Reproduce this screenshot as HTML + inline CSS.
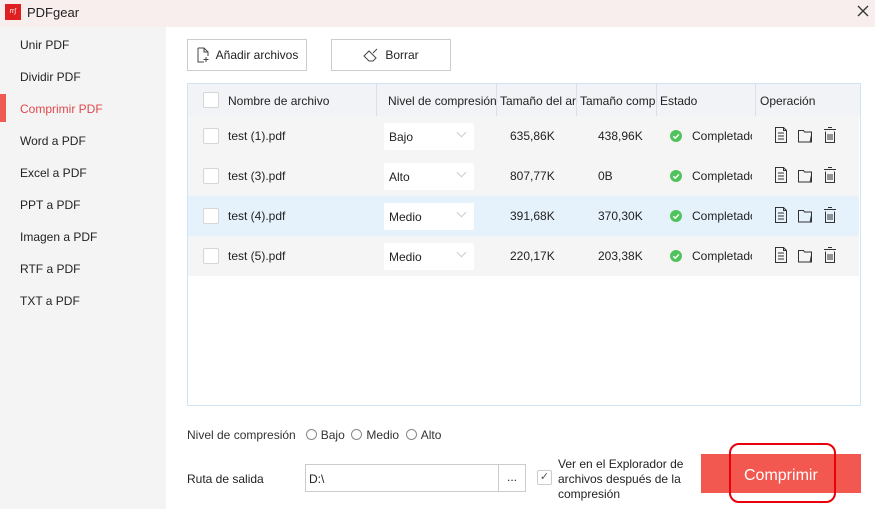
<!DOCTYPE html>
<html><head><meta charset="utf-8"><style>
*{margin:0;padding:0;box-sizing:border-box}
body{width:875px;height:509px;overflow:hidden;font-family:"Liberation Sans",sans-serif;font-size:12px;color:#222;background:#fff;position:relative}
.abs{position:absolute}
.title{left:0;top:0;width:875px;height:27px;background:#f8eeed}
.side{left:0;top:27px;width:166px;height:482px;background:#f4f4f4}
.side div{position:absolute;left:20px;font-size:12px;color:#222}
.btn{border:1px solid #ccc;background:#fff;height:32px;display:flex;align-items:center;justify-content:center;font-size:12px}
.cb{position:absolute;width:16px;height:16px;border:1px solid #d6d6d6;border-radius:2px;background:#fff}
.row{position:absolute;left:188px;width:671px;height:40px;background:#f5f5f5}
.row span{position:absolute;top:13px}
.dd{position:absolute;left:196px;top:7px;width:90px;height:27px;background:#fff;border-radius:2px}
.dd i{position:absolute;left:5px;top:7px;font-style:normal}
.dd b{position:absolute;right:9px;top:6px;width:7px;height:7px;border-right:1px solid #ccc;border-bottom:1px solid #ccc;transform:rotate(45deg)}
.ok{position:absolute;left:482px;top:14px;width:12px;height:12px}
.ops{position:absolute;left:586px;top:11px}
.hd{position:absolute;top:10px;font-size:12px}
.sep{position:absolute;top:0;width:1px;height:33px;background:#dde}
.radio{display:inline-block;width:11px;height:11px;border:1px solid #888;border-radius:50%;vertical-align:-1px;margin-right:4px}
</style></head><body>
<div class="abs title"></div>
<div class="abs" style="left:5px;top:4px;width:16px;height:16px;background:#e02020;color:#fff;font-size:7px;line-height:16px;text-align:center">rr∫</div>
<div class="abs" style="left:27px;top:5px;font-size:13px">PDFgear</div>
<svg class="abs" style="left:857px;top:5px" width="12" height="12"><path d="M1 1L11 11M11 1L1 11" stroke="#333" stroke-width="1.3"/></svg>
<div class="abs side">
<div style="top:11px">Unir PDF</div>
<div style="top:43px">Dividir PDF</div>
<div style="top:75px;color:#e0484b">Comprimir PDF</div>
<div style="top:107px">Word a PDF</div>
<div style="top:139px">Excel a PDF</div>
<div style="top:171px">PPT a PDF</div>
<div style="top:203px">Imagen a PDF</div>
<div style="top:235px">RTF a PDF</div>
<div style="top:267px">TXT a PDF</div>
<span style="position:absolute;left:0;top:67px;width:6px;height:28px;background:#f05a55"></span>
</div>
<div class="abs btn" style="left:187px;top:39px;width:120px"><svg width="14" height="16" style="margin-right:6px"><path d="M2 1h6l4 4v4M2 1v14h6M8 1v4h4M10 10v5M7.5 12.5h5" fill="none" stroke="#444"/></svg>Añadir archivos</div>
<div class="abs btn" style="left:331px;top:39px;width:120px"><svg width="16" height="14" style="margin-right:6px"><path d="M1 8l5-5 7 7-3 3H6zM10 5l4-4" fill="none" stroke="#444"/></svg>Borrar</div>
<div class="abs" style="left:187px;top:83px;width:674px;height:323px;border:1px solid #cfe3f3;background:#fff">
<div style="position:absolute;left:0;top:0;width:672px;height:33px;background:#f2f3f7">
<div class="cb" style="left:15px;top:8px"></div>
<span class="hd" style="left:40px">Nombre de archivo</span>
<div class="sep" style="left:188px"></div>
<span class="hd" style="left:200px;width:108px;overflow:hidden;white-space:nowrap">Nivel de compresión</span>
<div class="sep" style="left:308px"></div>
<span class="hd" style="left:312px;width:76px;overflow:hidden;white-space:nowrap">Tamaño del archivo</span>
<div class="sep" style="left:388px"></div>
<span class="hd" style="left:392px;width:76px;overflow:hidden;white-space:nowrap">Tamaño comprimido</span>
<div class="sep" style="left:468px"></div>
<span class="hd" style="left:472px">Estado</span>
<div class="sep" style="left:567px"></div>
<span class="hd" style="left:572px">Operación</span>
</div>
</div>
<svg width="0" height="0" style="position:absolute"><defs>
<g id="ok"><circle cx="6" cy="6" r="6" fill="#4fc35c"/><path d="M3.3 6.2l2 2 3.6-3.8" fill="none" stroke="#fff" stroke-width="1.4"/></g>
<g id="op" fill="none" stroke="#333" stroke-width="1"><path d="M1.5 0.5h8l3 3v12h-11zM9.5 0.5v3h3M4 6h6M4 9h6M4 12h6"/><path d="M24.5 3.5h5l1 1.5h7v10h-13zM37.5 8l-1.5 7.5"/><path d="M50 2.5h12M54 0.5h4M51.5 4.5v11h9v-11M54 7v6M56 7v6M58 7v6"/></g>
</defs></svg>
<div class="row" style="top:116px"><div class="cb" style="left:15px;top:12px"></div><span style="left:40px">test (1).pdf</span><div class="dd"><i>Bajo</i><b></b></div><span style="left:322px">635,86K</span><span style="left:410px">438,96K</span><svg class="ok"><use href="#ok"/></svg><span style="left:504px;width:60px;overflow:hidden;white-space:nowrap">Completado</span><svg class="ops" width="64" height="17"><use href="#op"/></svg></div>
<div class="row" style="top:156px"><div class="cb" style="left:15px;top:12px"></div><span style="left:40px">test (3).pdf</span><div class="dd"><i>Alto</i><b></b></div><span style="left:322px">807,77K</span><span style="left:410px">0B</span><svg class="ok"><use href="#ok"/></svg><span style="left:504px;width:60px;overflow:hidden;white-space:nowrap">Completado</span><svg class="ops" width="64" height="17"><use href="#op"/></svg></div>
<div class="row" style="top:196px;background:#e5f2fc"><div class="cb" style="left:15px;top:12px"></div><span style="left:40px">test (4).pdf</span><div class="dd"><i>Medio</i><b></b></div><span style="left:322px">391,68K</span><span style="left:410px">370,30K</span><svg class="ok"><use href="#ok"/></svg><span style="left:504px;width:60px;overflow:hidden;white-space:nowrap">Completado</span><svg class="ops" width="64" height="17"><use href="#op"/></svg></div>
<div class="row" style="top:236px"><div class="cb" style="left:15px;top:12px"></div><span style="left:40px">test (5).pdf</span><div class="dd"><i>Medio</i><b></b></div><span style="left:322px">220,17K</span><span style="left:410px">203,38K</span><svg class="ok"><use href="#ok"/></svg><span style="left:504px;width:60px;overflow:hidden;white-space:nowrap">Completado</span><svg class="ops" width="64" height="17"><use href="#op"/></svg></div>
<div class="abs" style="left:187px;top:428px;color:#333">Nivel de compresión&nbsp;&nbsp; <span class="radio"></span>Bajo&nbsp; <span class="radio"></span>Medio&nbsp; <span class="radio"></span>Alto</div>
<div class="abs" style="left:187px;top:472px">Ruta de salida</div>
<div class="abs" style="left:305px;top:464px;width:194px;height:28px;border:1px solid #ccc;padding:7px 3px">D:\</div>
<div class="abs" style="left:498px;top:464px;width:28px;height:28px;border:1px solid #ccc;text-align:center;line-height:24px">...</div>
<div class="abs" style="left:537px;top:470px;width:15px;height:15px;border:1px solid #ccc;border-radius:2px;font-size:11px;text-align:center;line-height:13px;color:#555">✓</div>
<div class="abs" style="left:558px;top:457px;width:130px;line-height:15px">Ver en el Explorador de archivos después de la compresión</div>
<div class="abs" style="left:701px;top:454px;width:160px;height:39px;background:#f25750;color:#fff;font-size:16px;text-align:center;line-height:44px;padding-left:0"><span style="position:absolute;left:43px;top:0">Comprimir</span></div>
<div class="abs" style="left:729px;top:443px;width:107px;height:60px;border:2px solid #e8000a;border-radius:10px"></div>
</body></html>
